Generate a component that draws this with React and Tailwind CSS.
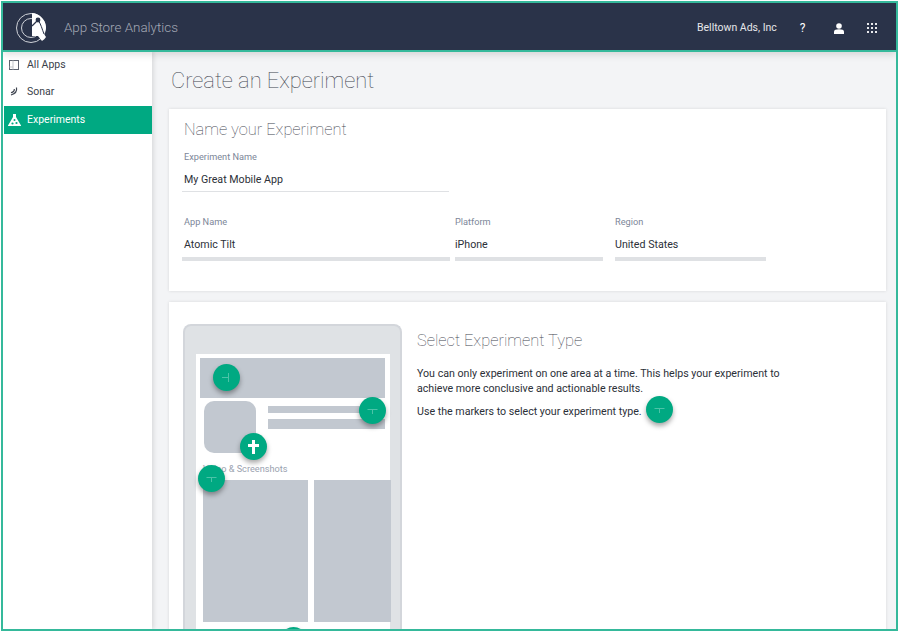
const font = { fontFamily: 'Roboto, sans-serif' }

function Marker({ className, glyph = 'thin' }) {
  return (
    <div className={`absolute flex h-[27px] w-[27px] items-center justify-center rounded-full bg-[#00a982] shadow-[0_3px_5px_rgba(0,0,0,0.35)] ${className}`}>
      {glyph === 'bold' ? (
        <svg width="11" height="14" viewBox="0 0 11 14" fill="#fff">
          <path d="M4 0h3v4h4v3H7v7H4V7H0V4h4z" />
        </svg>
      ) : glyph === 'side' ? (
        <svg width="11" height="11" viewBox="0 0 11 11" stroke="#4cc3a8" fill="none">
          <path d="M1 5.500h6.500M7.500 1v9" />
        </svg>
      ) : (
        <svg width="11" height="11" viewBox="0 0 11 11" stroke="#4cc3a8" fill="none">
          <path d="M0.500 4.500h10M5.500 4.500V9" />
        </svg>
      )}
    </div>
  )
}

function Logo() {
  return (
    <svg width="32" height="32" viewBox="0 0 32 32" fill="none">
      <circle cx="16" cy="16" r="14.500" stroke="#cfd2d8" strokeWidth="1" />
      <circle cx="16" cy="16" r="9.500" stroke="#cfd2d8" strokeWidth="1" />
      <path d="M17 1C24 1 31 8 31 15C31 18 30 20 29 22L31 25C30 27 28 28 27 29L23 24L17 24Z" fill="#fff" />
      <path d="M17 14L23 8" stroke="#2a3349" strokeWidth="1.200" />
      <path d="M23 8C26 12 27 17 29 22" stroke="#2a3349" strokeWidth="1" />
      <circle cx="23" cy="8" r="2.400" fill="#2a3349" />
    </svg>
  )
}

function Field({ label, value, className, thick = true, inset = false }) {
  const pad = inset ? 'pl-[2px]' : ''
  return (
    <div className={className}>
      <div className={`${pad} text-[9.2px] leading-[12px] text-[#7d8799]`}>{label}</div>
      <div className={`${pad} mt-[10px] text-[10.65px] leading-[14px] text-[#2c3038]`}>{value}</div>
      <div className={thick ? 'mt-[5px] h-[4px] bg-[#dfe1e4]' : 'mt-[4px] h-px bg-[#dfe1e4]'} />
    </div>
  )
}

export default function App() {
  return (
    <div style={font} className="h-[632px] w-[901px] overflow-hidden bg-white pb-px pl-px pr-[3px] pt-px">
      <div className="flex h-full w-full flex-col overflow-hidden border-2 border-[#35b99b]">
        {/* Header */}
        <div className="relative z-20 shrink-0 shadow-[0_3px_7px_rgba(0,0,0,0.12)]">
          <header className="flex h-[47px] items-center bg-[#2a3349] pl-[12px] pr-[19px] pt-[3px]">
            <Logo />
            <span className="ml-[17px] text-[13.4px] font-light text-[#a4a9b5]">App Store Analytics</span>
            <span className="ml-auto text-[10.5px] text-[#e6e7ea]">Belltown Ads, Inc</span>
            <span className="ml-[23px] text-[12px] text-white">?</span>
            <svg className="ml-[28px]" width="10" height="11" viewBox="0 0 10 11" fill="#fff">
              <circle cx="5" cy="3" r="2.800" />
              <path d="M0 11V8.500C0 7 2 6.300 5 6.300S10 7 10 8.500V11z" />
            </svg>
            <div className="ml-[23px] grid grid-cols-3 gap-[1.500px]">
              {Array.from({ length: 9 }).map((_, i) => (
                <div key={i} className="h-[2.500px] w-[2.500px] bg-[#e8e9ec]" />
              ))}
            </div>
          </header>
          <div className="h-[2px] bg-[#35b99b]" />
        </div>

        <div className="flex min-h-0 flex-1">
          {/* Sidebar */}
          <aside className="relative z-10 w-[149px] shrink-0 bg-white pl-px text-[10.5px] text-[#3a3f4a] shadow-[2px_0_4px_rgba(0,0,0,0.1)]">
            <div className="flex h-[27px] items-center gap-[7px] pb-[2px] pl-[4px]">
              <svg width="12" height="12" viewBox="0 0 12 12" fill="none" stroke="#5d6370">
                <rect x="1.500" y="1.500" width="9" height="9" />
                <path d="M5 1.500v9M1.500 8h3.500" stroke="#c3c6cb" />
              </svg>
              <span>All Apps</span>
            </div>
            <div className="flex h-[27px] items-center gap-[7px] pb-[2px] pl-[4px]">
              <svg width="12" height="12" viewBox="0 0 12 12" fill="none" stroke="#3f4450" strokeWidth="1.200">
                <path d="M8.500 1.500c.7 3.500-.8 6-5.500 7.500M6.300 3c.2 1.800-.7 3-3.300 3.800" />
              </svg>
              <span>Sonar</span>
            </div>
            <div className="flex h-[28px] items-center gap-[6px] bg-[#00a982] pl-[4px] text-white">
              <svg width="13" height="12" viewBox="0 0 13 12" fill="#fff">
                <path d="M5 0h3v3L13 11.500V12H0v-.5L5 3z" />
                <circle cx="6.500" cy="6" r="1" fill="#00a982" />
                <circle cx="4.500" cy="9.500" r="1.100" fill="#00a982" />
                <circle cx="8.500" cy="9" r="1.100" fill="#00a982" />
              </svg>
              <span>Experiments</span>
            </div>
          </aside>

          {/* Main */}
          <main className="min-w-0 flex-1 bg-[#f3f4f6] pl-[17px] pr-[10px]">
            <h1 className="pl-[2px] pt-[15px] text-[21.9px] font-thin leading-[28px] text-[#3f4550]">Create an Experiment</h1>
            <section className="mt-[14px] h-[182px] bg-white px-[13px] pt-[11px] shadow-[0_0_3px_rgba(0,0,0,0.12)]">
              <h2 className="pl-[2px] text-[16.4px] font-thin leading-[20px] text-[#3f4550]">Name your Experiment</h2>
              <Field className="mt-[11px] w-[267px]" label="Experiment Name" value="My Great Mobile App" thick={false} inset />
              <div className="mt-[24px] flex">
                <Field className="w-[268px]" label="App Name" value="Atomic Tilt" inset />
                <Field className="ml-[5px] w-[148px]" label="Platform" value="iPhone" />
                <Field className="ml-[12px] w-[151px]" label="Region" value="United States" />
              </div>
            </section>
            <section className="mt-[11px] flex h-[400px] bg-white pl-[14px] pt-[22px] shadow-[0_0_3px_rgba(0,0,0,0.12)]">
              {/* Phone mockup */}
              <div className="relative h-[400px] w-[219px] shrink-0 rounded-t-[8px] border-2 border-b-0 border-[#d3d6db] bg-[#dfe2e5] pl-[11px] pr-[10px] pt-[28px]">
                <div className="h-full bg-white pl-[4px] pt-[4px]">
                  <div className="h-[40px] w-[185px] bg-[#c2c8d0]" />
                  <div className="mt-[3px] flex pl-[4px]">
                    <div className="h-[52px] w-[52px] rounded-[10px] bg-[#c2c8d0]" />
                    <div className="ml-[12px] pt-[5px]">
                      <div className="h-[7px] w-[117px] bg-[#c2c8d0]" />
                      <div className="mt-[6px] h-[10px] w-[117px] bg-[#c2c8d0]" />
                    </div>
                  </div>
                  <div className="mt-[10px] pl-[3px] text-[9.2px] leading-[12px] text-[#9aa2af]">Video &amp; Screenshots</div>
                  <div className="mt-[5px] flex gap-[6px] pl-[3px]">
                    <div className="h-[142px] w-[105px] shrink-0 bg-[#c2c8d0]" />
                    <div className="h-[142px] w-[77px] shrink-0 bg-[#c2c8d0]" />
                  </div>
                </div>
                <Marker className="left-[28px] top-[38px]" glyph="side" />
                <Marker className="left-[174px] top-[71px]" />
                <Marker className="left-[55px] top-[107px]" glyph="bold" />
                <Marker className="left-[13px] top-[139px]" />
                <Marker className="left-[95px] top-[301px]" />
              </div>
              <div className="ml-[15px] pt-[7px]">
                <h2 className="text-[16.4px] font-thin leading-[20px] text-[#3f4550]">Select Experiment Type</h2>
                <p className="mt-[15px] w-[375px] text-[10.65px] leading-[15px] text-[#2c3038]">
                  You can only experiment on one area at a time. This helps your experiment to achieve more conclusive and actionable results.
                </p>
                <div className="relative mt-[8px] text-[10.65px] leading-[15px] text-[#2c3038]">
                  Use the markers to select your experiment type.
                  <Marker className="left-[229px] top-[-8px]" />
                </div>
              </div>
            </section>
          </main>
        </div>
      </div>
    </div>
  )
}
